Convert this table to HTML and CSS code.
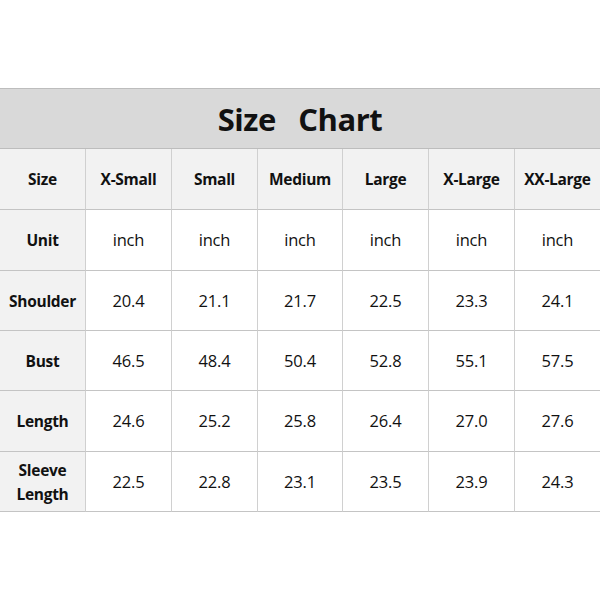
FILE: index.html
```html
<!DOCTYPE html>
<html>
<head>
<meta charset="utf-8">
<link rel="stylesheet" href="styles.css">
</head>
<body>
<div class="chart">
  <div class="title">Size&nbsp;&nbsp;&nbsp;Chart</div>
  <div class="grid">
    <div class="cell label">Size</div>
    <div class="cell head">X-Small</div>
    <div class="cell head">Small</div>
    <div class="cell head">Medium</div>
    <div class="cell head">Large</div>
    <div class="cell head">X-Large</div>
    <div class="cell head">XX-Large</div>

    <div class="cell label">Unit</div>
    <div class="cell">inch</div>
    <div class="cell">inch</div>
    <div class="cell">inch</div>
    <div class="cell">inch</div>
    <div class="cell">inch</div>
    <div class="cell">inch</div>

    <div class="cell label">Shoulder</div>
    <div class="cell">20.4</div>
    <div class="cell">21.1</div>
    <div class="cell">21.7</div>
    <div class="cell">22.5</div>
    <div class="cell">23.3</div>
    <div class="cell">24.1</div>

    <div class="cell label">Bust</div>
    <div class="cell">46.5</div>
    <div class="cell">48.4</div>
    <div class="cell">50.4</div>
    <div class="cell">52.8</div>
    <div class="cell">55.1</div>
    <div class="cell">57.5</div>

    <div class="cell label">Length</div>
    <div class="cell">24.6</div>
    <div class="cell">25.2</div>
    <div class="cell">25.8</div>
    <div class="cell">26.4</div>
    <div class="cell">27.0</div>
    <div class="cell">27.6</div>

    <div class="cell label">Sleeve<br>Length</div>
    <div class="cell">22.5</div>
    <div class="cell">22.8</div>
    <div class="cell">23.1</div>
    <div class="cell">23.5</div>
    <div class="cell">23.9</div>
    <div class="cell">24.3</div>
  </div>
</div>
</body>
</html>
```
FILE: styles.css
```css
html, body {
  margin: 0;
  padding: 0;
  background: #ffffff;
}
body {
  font-family: "Open Sans", "Noto Sans", sans-serif;
  color: #111;
  padding-top: 88px;
}
.chart {
  width: 600px;
}
.title {
  height: 59px;
  border-top: 1px solid #bdbdbd;
  border-bottom: 1px solid #bdbdbd;
  background: #d9d9d9;
  display: flex;
  align-items: center;
  justify-content: center;
  font-size: 31px;
  font-weight: 700;
  letter-spacing: -0.5px;
}
.grid {
  display: grid;
  grid-template-columns: 85px 86px 86px 85px 86px 86px 86px;
  grid-template-rows: 61px 61px 60px 60px 61px 60px;
}
.cell {
  display: flex;
  align-items: center;
  justify-content: center;
  text-align: center;
  font-size: 16.5px;
  line-height: 24px;
  border-bottom: 1px solid #c4c4c4;
  border-left: 1px solid #d0d0d0;
  background: #ffffff;
  letter-spacing: -0.2px;
}
.label {
  border-left: none;
  background: #f2f2f2;
  font-weight: 700;
  font-size: 15.5px;
  letter-spacing: -0.3px;
}
.head {
  background: #f2f2f2;
  font-weight: 700;
  font-size: 15.5px;
  letter-spacing: -0.3px;
}
```
